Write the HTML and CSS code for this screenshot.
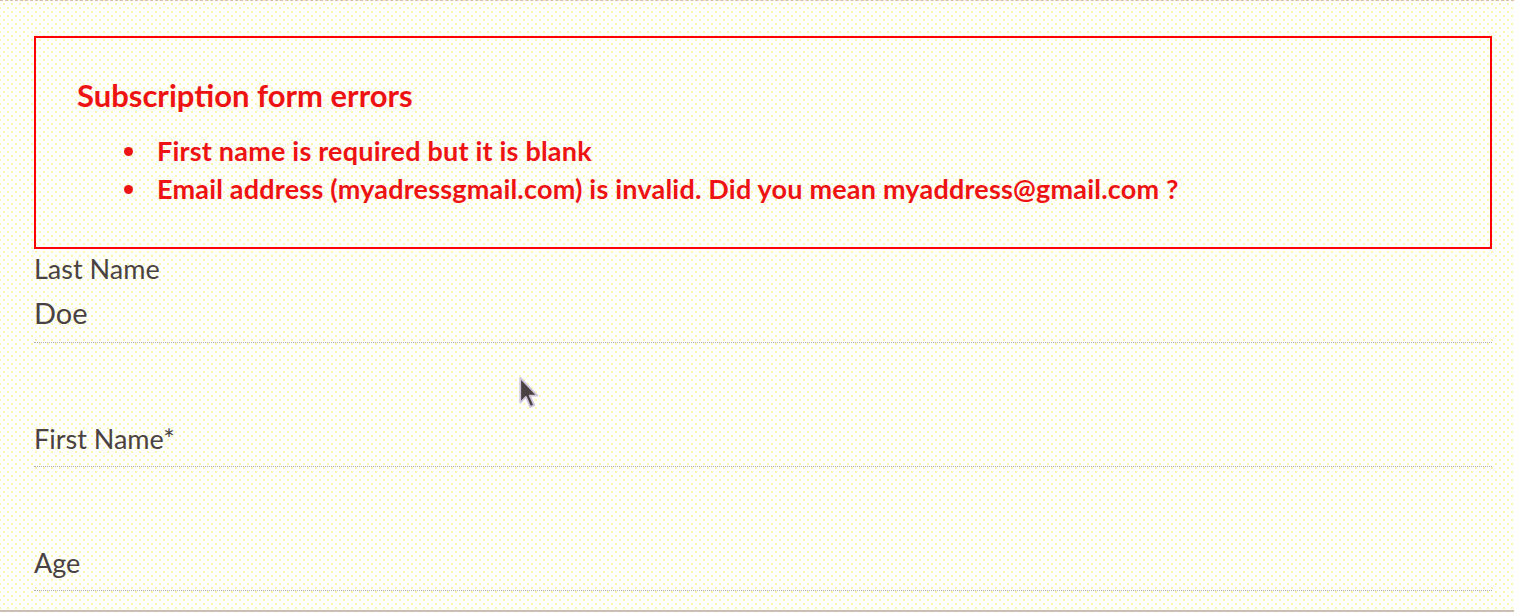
FILE: index.html
```html
<!DOCTYPE html>
<html>
<head>
<meta charset="utf-8">
<link rel="stylesheet" href="styles.css">
</head>
<body>
<div class="page">
  <div class="errors">
    <h2 class="errors-title">Subscription form errors</h2>
    <ul class="errors-list">
      <li>First name is required but it is blank</li>
      <li>Email address (myadressgmail.com) is invalid. Did you mean myaddress@gmail.com ?</li>
    </ul>
  </div>
  <div class="field field-filled">
    <label class="field-label">Last Name</label>
    <div class="field-value">Doe</div>
  </div>
  <div class="field">
    <label class="field-label">First Name*</label>
  </div>
  <div class="field">
    <label class="field-label">Age</label>
  </div>
  <svg class="cursor" width="26" height="38" viewBox="0 0 20 30">
    <path d="M1.5 1.5 L1.5 21 L6 16.5 L9.5 24.5 L12.5 23 L9 15.5 L15 15.5 Z" fill="#4a4242" stroke="#cdc3da" stroke-width="1.4" stroke-linejoin="round"/>
  </svg>
</div>
</body>
</html>
```
FILE: styles.css
```css
html, body {
  margin: 0;
  padding: 0;
}
body {
  background-color: #fefefb;
  background-image:
    radial-gradient(circle, #f7ee7a 0.5px, transparent 1px),
    radial-gradient(circle, #f7ee7a 0.5px, transparent 1px);
  background-size: 8px 8px;
  background-position: 0 0, 4px 4px;
  font-family: Lato, "Liberation Sans", sans-serif;
  color: #4a4242;
  overflow: hidden;
}
.page {
  position: relative;
  box-sizing: border-box;
  height: 612px;
  border-top: 1px dashed #d8bcae;
  border-bottom: 2px solid #cbbfb2;
  padding: 35px 22px 0 34px;
}
.errors {
  border: 2px solid #ff0000;
  padding: 37px 40px 30px 41px;
  color: #ee1313;
  height: 213px;
  box-sizing: border-box;
}
.errors-title {
  margin: 0 0 17px;
  font-size: 31px;
  font-weight: 700;
  line-height: 40px;
}
.errors-list {
  margin: 0;
  padding: 0 0 0 47px;
  list-style: none;
  font-size: 27px;
  font-weight: 700;
  line-height: 38px;
  letter-spacing: 0.2px;
}
.errors-list li {
  display: flex;
  align-items: center;
}
.errors-list li::before {
  content: "";
  flex: none;
  width: 9px;
  height: 9px;
  border-radius: 50%;
  background: #ee1313;
  margin-right: 24px;
}
.field {
  border-bottom: 1px dotted #b8aeb4;
  box-sizing: border-box;
}
.field-filled {
  height: 94px;
  padding-top: 6px;
}
.field + .field {
  height: 124px;
  padding-top: 82px;
}
.field-label {
  display: block;
  font-size: 27px;
  line-height: 28px;
}
.field-value {
  font-size: 29px;
  line-height: 36px;
  margin-top: 12px;
}
.cursor {
  position: absolute;
  left: 518px;
  top: 375px;
}
```
